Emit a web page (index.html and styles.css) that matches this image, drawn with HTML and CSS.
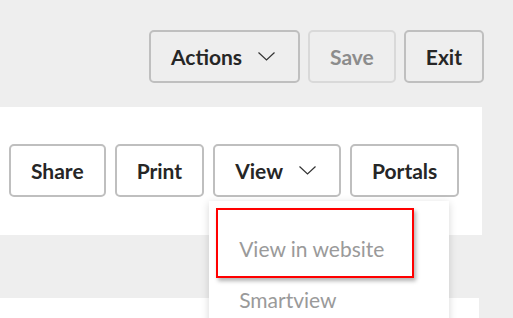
FILE: index.html
```html
<!DOCTYPE html>
<html lang="en">
<head>
    <meta charset="UTF-8">
    <title>Record</title>
    <link rel="stylesheet" href="styles.css">
</head>
<body>
    <div class="topbar">
        <button class="btn">Actions
            <svg class="chevron" width="17" height="9" viewBox="0 0 17 9"><polyline points="0.5,0.5 8.5,8 16.5,0.5"/></svg>
        </button>
        <button class="btn" disabled>Save</button>
        <button class="btn">Exit</button>
    </div>
    <div class="panel">
        <div class="toolbar">
            <button class="btn btn-white">Share</button>
            <button class="btn btn-white">Print</button>
            <div class="menu">
                <button class="btn btn-white">View
                    <svg class="chevron" width="17" height="9" viewBox="0 0 17 9"><polyline points="0.5,0.5 8.5,8 16.5,0.5"/></svg>
                </button>
                <div class="dropdown">
                    <div class="item marked">View in website</div>
                    <div class="item">Smartview</div>
                </div>
            </div>
            <button class="btn btn-white">Portals</button>
        </div>
    </div>
    <div class="panel panel-lower"></div>
</body>
</html>
```
FILE: styles.css
```css
html, body
{
    margin: 0;
    padding: 0;
}
body
{
    background: #eeeeee;
    color: #262626;
    font-family: Lato, 'Open Sans', sans-serif;
    overflow: hidden;
}
.topbar
{
    height: 107px;
    box-sizing: border-box;
    padding: 30px 29px 0 0;
    display: flex;
    justify-content: flex-end;
    align-items: flex-start;
    gap: 8px;
}
.btn
{
    height: 53px;
    padding: 0 20px;
    border: 2px solid #bfbfbf;
    border-radius: 5px;
    background: #eeeeee;
    color: #262626;
    font-family: inherit;
    font-size: 21px;
    font-weight: bold;
    display: flex;
    align-items: center;
    gap: 16px;
    cursor: pointer;
}
.btn[disabled]
{
    color: #8c8c8c;
    border-color: #d9d9d9;
    cursor: default;
}
.btn-white
{
    background: #fff;
}
.chevron
{
    margin-right: 3px;
}
.chevron polyline
{
    fill: none;
    stroke: #333;
    stroke-width: 1.2;
}
.panel
{
    width: 482px;
    height: 128px;
    background: #fff;
}
.panel-lower
{
    width: 479px;
    margin-top: 63px;
    height: 40px;
}
.toolbar
{
    display: flex;
    gap: 9px;
    padding: 37px 0 0 9px;
}
.menu
{
    position: relative;
}
.dropdown
{
    position: absolute;
    top: 57px;
    left: -4px;
    width: 240px;
    height: 140px;
    padding-top: 7px;
    box-sizing: border-box;
    background: #fff;
    box-shadow: 0 2px 8px rgba(0, 0, 0, 0.16);
    z-index: 2;
}
.item
{
    padding-left: 30px;
    font-size: 21px;
    line-height: 24px;
    color: #9a9a9a;
}
.item.marked
{
    width: 198px;
    height: 70px;
    margin-left: 7px;
    margin-bottom: 10px;
    padding: 27px 0 0 21px;
    box-sizing: border-box;
    border: 2px solid #ff0000;
    box-shadow: 2px 3px 4px rgba(0, 0, 0, 0.3);
}
```
